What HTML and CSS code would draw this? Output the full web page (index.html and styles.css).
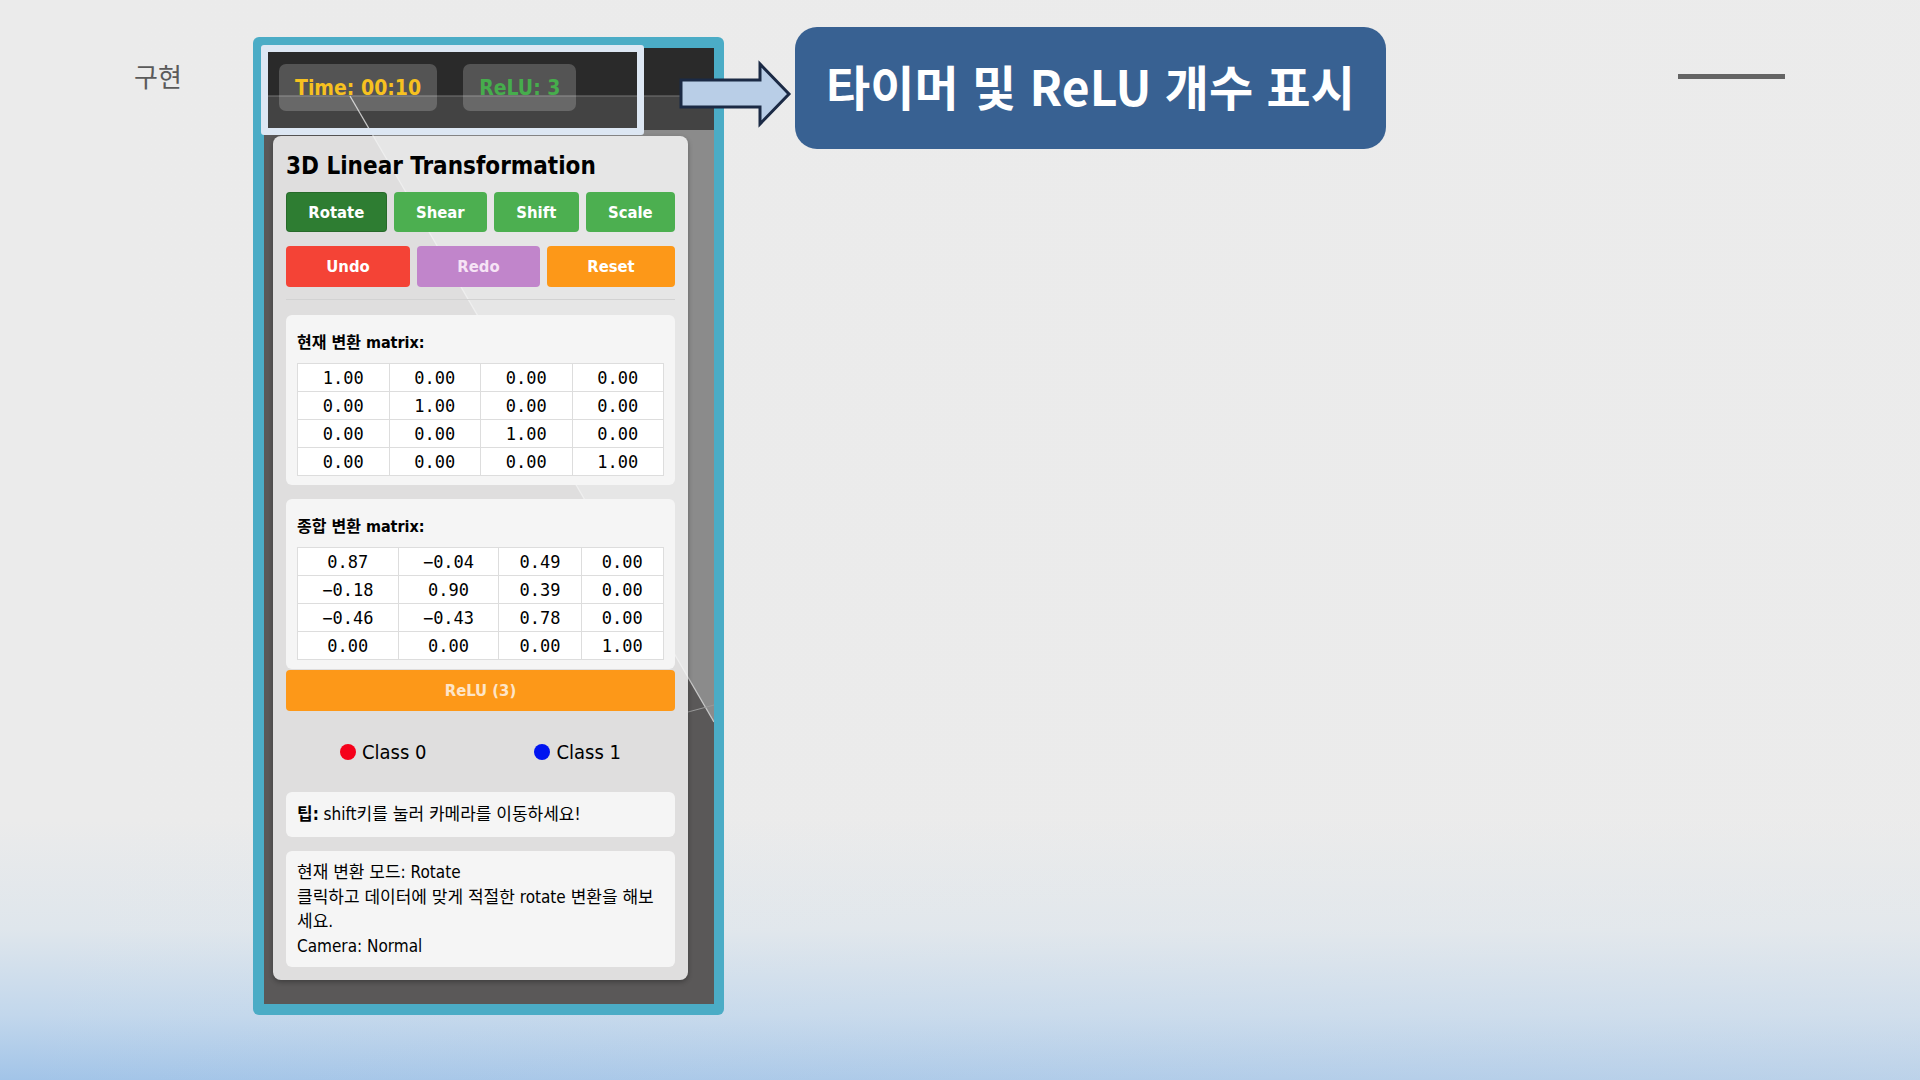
FILE: index.html
```html
<!DOCTYPE html>
<html lang="ko">
<head>
<meta charset="utf-8">
<title>구현</title>
<link rel="stylesheet" href="styles.css">
</head>
<body>
<div class="slide">
  <div class="slide-label">구현</div>

  <div class="device">
    <div class="screen">
      <svg class="scene" viewBox="0 0 450 956" width="450" height="956" aria-hidden="true">
        <rect x="0" y="0" width="450" height="956" fill="#5a5858"/>
        <rect x="0" y="0" width="450" height="48" fill="#2a2a2a"/>
        <rect x="0" y="48" width="450" height="34" fill="#434343"/>
        <polygon points="106,82 450,82 450,674" fill="#8b8b8b"/>
        <line x1="0" y1="48" x2="450" y2="48" stroke="#777" stroke-width="1.2"/>
        <line x1="86" y1="48" x2="450" y2="674" stroke="#c9c9c9" stroke-width="1.3"/>
        <line x1="424" y1="664" x2="450" y2="657" stroke="#9a9a9a" stroke-width="1"/>
      </svg>

      <div class="hud">
        <div class="badge badge-time">Time: 00:10</div>
        <div class="badge badge-relu">ReLU: 3</div>
      </div>

      <div class="panel">
        <h1 class="panel-title">3D Linear Transformation</h1>
        <div class="btn-row">
          <button class="btn btn-green btn-active">Rotate</button>
          <button class="btn btn-green">Shear</button>
          <button class="btn btn-green">Shift</button>
          <button class="btn btn-green">Scale</button>
        </div>
        <div class="btn-row btn-row-2">
          <button class="btn btn-red">Undo</button>
          <button class="btn btn-purple">Redo</button>
          <button class="btn btn-orange">Reset</button>
        </div>
        <hr class="sep">

        <div class="matrix-box">
          <div class="matrix-title">현재 변환 matrix:</div>
          <table class="matrix">
            <tr><td>1.00</td><td>0.00</td><td>0.00</td><td>0.00</td></tr>
            <tr><td>0.00</td><td>1.00</td><td>0.00</td><td>0.00</td></tr>
            <tr><td>0.00</td><td>0.00</td><td>1.00</td><td>0.00</td></tr>
            <tr><td>0.00</td><td>0.00</td><td>0.00</td><td>1.00</td></tr>
          </table>
        </div>

        <div class="matrix-box matrix-box-2">
          <div class="matrix-title">종합 변환 matrix:</div>
          <table class="matrix">
            <tr><td>0.87</td><td>−0.04</td><td>0.49</td><td>0.00</td></tr>
            <tr><td>−0.18</td><td>0.90</td><td>0.39</td><td>0.00</td></tr>
            <tr><td>−0.46</td><td>−0.43</td><td>0.78</td><td>0.00</td></tr>
            <tr><td>0.00</td><td>0.00</td><td>0.00</td><td>1.00</td></tr>
          </table>
        </div>

        <button class="btn btn-relu">ReLU (3)</button>

        <div class="legend">
          <div class="legend-item"><span class="dot dot-red"></span>Class 0</div>
          <div class="legend-item"><span class="dot dot-blue"></span>Class 1</div>
        </div>

        <div class="tip"><b>팁:</b> shift키를 눌러 카메라를 이동하세요!</div>

        <div class="info">
          <div>현재 변환 모드: Rotate</div>
          <div>클릭하고 데이터에 맞게 적절한 rotate 변환을 해보세요.</div>
          <div>Camera: Normal</div>
        </div>
      </div>
    </div>
  </div>

  <div class="highlight"></div>

  <svg class="arrow" viewBox="0 0 120 70" width="120" height="70" aria-hidden="true">
    <polygon points="5,20 84,20 84,4 113,34 84,64 84,47 5,47" fill="#b9cee7" stroke="#1b2a45" stroke-width="3" stroke-linejoin="miter"/>
  </svg>

  <div class="callout"><span class="callout-text">타이머 및 ReLU 개수 표시</span></div>

  <div class="dash"></div>
</div>
</body>
</html>
```

FILE: styles.css
```css
* { box-sizing: border-box; }

html, body {
  margin: 0;
  padding: 0;
  width: 1920px;
  height: 1080px;
  overflow: hidden;
}

body {
  font-family: "DejaVu Sans Condensed", "DejaVu Sans", "Noto Sans CJK KR", sans-serif;
  background:
    linear-gradient(90deg, rgba(236,236,236,0) 0%, rgba(236,236,236,0.35) 100%),
    linear-gradient(180deg, #ebebeb 0%, #ebebeb 76%, #dfe6ec 86%, #c2d7ec 94%, #a2c4e8 100%);
}

.slide {
  position: relative;
  width: 1920px;
  height: 1080px;
}

.slide-label {
  position: absolute;
  left: 134px;
  top: 59px;
  font-family: "Noto Sans CJK KR", sans-serif;
  font-weight: 400;
  font-size: 26px;
  line-height: 34px;
  color: #5a5a5a;
}

/* device frame */
.device {
  position: absolute;
  left: 253px;
  top: 37px;
  width: 471px;
  height: 978px;
  background: #4bacc6;
  border-radius: 6px;
  padding: 11px 10px 11px 11px;
}

.screen {
  position: relative;
  width: 450px;
  height: 956px;
  overflow: hidden;
  display: flex;
  flex-direction: column;
  align-items: flex-start;
}

.scene {
  position: absolute;
  left: 0;
  top: 0;
  display: block;
}

.hud {
  position: relative;
  display: flex;
  gap: 26px;
  padding: 16px 15px 0;
}

.badge {
  height: 47px;
  padding: 0 16px;
  display: flex;
  align-items: center;
  justify-content: center;
  white-space: nowrap;
  border-radius: 7px;
  background: rgba(255,255,255,0.2);
  font-weight: 700;
  font-size: 21px;
}
.badge-time { color: #f6c120; min-width: 157px; }
.badge-relu { color: #46ad4c; min-width: 112px; }

/* control panel */
.panel {
  position: relative;
  margin: 25px 0 0 9px;
  width: 415px;
  padding: 15px 13px 13px;
  background: rgba(245,245,245,0.86);
  border-radius: 8px;
  box-shadow: 0 2px 5px rgba(0,0,0,0.3);
  color: #000;
}

.panel-title {
  margin: 0 0 11px;
  font-size: 24px;
  line-height: 30px;
  font-weight: 700;
}

.btn-row {
  display: flex;
  gap: 7px;
}
.btn-row-2 { margin-top: 14px; }

.btn {
  flex: 1 1 auto;
  height: 40px;
  padding: 0 8px;
  border: 0;
  border-radius: 4px;
  color: #fff;
  font-family: inherit;
  font-weight: 700;
  font-size: 16.5px;
}
.btn-row-2 .btn { height: 41px; }

.btn-green { background: #4caf50; }
.btn-active { background: #2e7d32; box-shadow: inset 0 0 0 1px rgba(0,0,0,0.15); }
.btn-red { background: #f44336; }
.btn-purple { background: #c185cb; color: #f6e3f5; }
.btn-orange { background: #fd9818; }

.sep {
  margin: 12px 0 15px;
  border: 0;
  height: 1px;
  background: #d2d2d2;
}

.matrix-box {
  background: #f5f5f5;
  border-radius: 6px;
  padding: 16px 11px 9px;
}
.matrix-box-2 { margin-top: 14px; }

.matrix-title {
  font-size: 16px;
  line-height: 24px;
  font-weight: 700;
  margin-bottom: 8px;
}

.matrix {
  width: 100%;
  border-collapse: collapse;
  background: #fff;
}
.matrix td {
  border: 1px solid #dddddd;
  padding: 0 2px;
  height: 28px;
  line-height: 26px;
  text-align: center;
  font-family: "DejaVu Sans Mono", "Liberation Mono", monospace;
  font-size: 17px;
  color: #000;
}

.btn-relu {
  display: block;
  width: 100%;
  margin-top: 1px;
  height: 41px;
  background: #fd9818;
  color: #fde5c8;
}

.legend {
  height: 81px;
  display: flex;
  justify-content: space-around;
  align-items: center;
}
.legend-item {
  display: flex;
  align-items: center;
  gap: 6px;
  font-size: 20px;
  color: #000;
}
.dot {
  width: 16px;
  height: 16px;
  border-radius: 50%;
  display: inline-block;
}
.dot-red { background: #f5001a; }
.dot-blue { background: #0014f0; }

.tip {
  background: #f5f5f5;
  border-radius: 6px;
  padding: 11px 11px;
  font-size: 17px;
  line-height: 23px;
}

.info {
  margin-top: 14px;
  background: #f5f5f5;
  border-radius: 6px;
  padding: 9px 11px;
  font-size: 17px;
  line-height: 24.5px;
}

/* slide annotations */
.highlight {
  position: absolute;
  left: 261px;
  top: 45px;
  width: 383px;
  height: 90px;
  border: 7px solid #dde7f3;
  border-radius: 3px;
}

.arrow {
  position: absolute;
  left: 676px;
  top: 60px;
  display: block;
}

.callout {
  position: absolute;
  left: 795px;
  top: 27px;
  width: 591px;
  height: 122px;
  background: #386192;
  border-radius: 22px;
  display: flex;
  align-items: center;
  justify-content: center;
  padding-bottom: 6px;
}
.callout-text {
  white-space: nowrap;
  font-family: "Noto Sans CJK KR", sans-serif;
  font-weight: 700;
  font-size: 48px;
  line-height: 60px;
  color: #fff;
}

.dash {
  position: absolute;
  left: 1678px;
  top: 74px;
  width: 107px;
  height: 5px;
  background: #646464;
}
```
